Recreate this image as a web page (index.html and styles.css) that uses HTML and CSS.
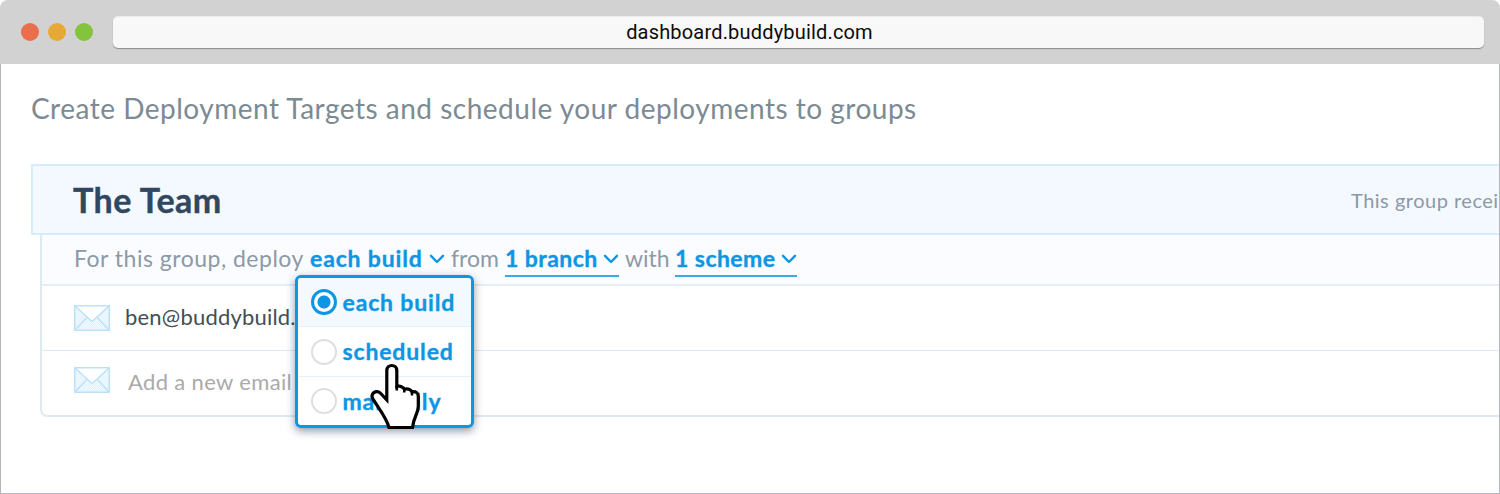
FILE: index.html
```html
<!DOCTYPE html>
<html lang="en">
<head>
<meta charset="utf-8">
<title>Deployment Targets</title>
<link rel="stylesheet" href="styles.css">
</head>
<body>
<svg class="defs" aria-hidden="true">
  <defs>
    <pattern id="dots" width="2" height="2" patternUnits="userSpaceOnUse">
      <rect width="2" height="2" fill="#f0f9ff"/><rect width="1" height="1" fill="#e2f3fe"/><rect x="1" y="1" width="1" height="1" fill="#e2f3fe"/>
    </pattern>
    <symbol id="mail" viewBox="0 0 36 26">
      <path d="M1 1h34v24H1z" fill="url(#dots)"/>
      <path d="M1 1h34L18 16.500z" fill="#fff"/>
      <path d="M.75.75h34.500v24.500H.75zM1 1l17 15.500L35 1M1 25l11.800-12.500M35 25L23.200 12.500" fill="none" stroke="#bce2fa" stroke-width="1.500"/>
    </symbol>
    <symbol id="chevron" viewBox="0 0 16 10">
      <path d="M2 1.800L8 8l6-6.200" fill="none" stroke="#0d96e3" stroke-width="2.400" stroke-linecap="round" stroke-linejoin="round"/>
    </symbol>
  </defs>
</svg>
<div class="window">
  <header class="toolbar">
    <div class="lights"><i class="light close"></i><i class="light minimize"></i><i class="light expand"></i></div>
    <div class="address"><span>dashboard.buddybuild.com</span></div>
  </header>
  <main class="page">
    <h1 class="title">Create Deployment Targets and schedule your deployments to groups</h1>
    <section class="group">
      <div class="group-head">
        <h2 class="group-name">The Team</h2>
        <span class="group-note">This group receiv</span>
      </div>
      <div class="group-body">
        <div class="rule">
          <span class="word intro">For this group, deploy</span>
          <div class="picker timing">
            <span class="value each">each build</span><svg class="chevron"><use href="#chevron"/></svg>
            <div class="menu">
              <div class="option selected"><i class="radio"></i><span class="label each">each build</span></div>
              <div class="option"><i class="radio"></i><span class="label each">scheduled</span></div>
              <div class="option"><i class="radio"></i><span class="label each">manually</span></div>
              <svg class="cursor" viewBox="0 0 54 68">
                <path d="M20.800 39V9.500C20.800 2.800 30.800 2.800 30.800 9.500V25.500C34 24.500 37.500 26 38.300 28.300C41.500 27 45 28.500 46 31C49.500 29.800 52.300 32 52.300 35.500V45C52.300 53 47.500 56 46.500 66.500H23C21.500 59 16.500 52.500 7.500 39C3 32.500 10.500 28 14.800 32.500Z" fill="#fff" stroke="#000" stroke-width="3.200"/>
                <path d="M30.800 24.500v5M38.300 27.500v4M46 30.500v4" fill="none" stroke="#000" stroke-width="2.500"/>
              </svg>
            </div>
          </div>
          <span class="word from">from</span>
          <div class="picker underlined branch"><span class="value">1 branch</span><svg class="chevron"><use href="#chevron"/></svg></div>
          <span class="word with">with</span>
          <div class="picker underlined scheme"><span class="value">1 scheme</span><svg class="chevron"><use href="#chevron"/></svg></div>
        </div>
        <div class="member"><svg class="mail"><use href="#mail"/></svg><span class="email">ben@buddybuild.</span></div>
        <div class="member new"><svg class="mail"><use href="#mail"/></svg><span class="placeholder">Add a new email</span></div>
      </div>
    </section>
  </main>
</div>
</body>
</html>
```
FILE: styles.css
```css
* { box-sizing: border-box; }
body { margin: 0; background: #fff; font-family: Lato, "Liberation Sans", sans-serif; }
.defs { position: absolute; width: 0; height: 0; }
.window { width: 1500px; height: 494px; overflow: hidden; display: flex; flex-direction: column; }
.toolbar { flex: none; height: 64px; padding: 0 16px 0 21px; display: flex; align-items: center; gap: 20px; background: #d2d2d2; border-radius: 8px 8px 0 0; }
.lights { display: flex; gap: 9px; }
.light { width: 18px; height: 18px; border-radius: 50%; }
.close { background: #ea6e4b; }
.minimize { background: #e7a936; }
.expand { background: #84c43c; }
.address { flex: 1; height: 32px; padding-right: 98px; border-radius: 5px; background: #f8f8f8; border-top: 1px solid #ececec; box-shadow: 0 1px 1px #8c8c8c; text-align: center; font: 20px/31px Roboto, sans-serif; letter-spacing: .18px; color: #0b0b0b; }
.page { flex: 1; border: 1px solid #b5b7ba; border-top: 0; padding: 24px 0 0 30px; overflow: hidden; }
.title { margin: 0; height: 76px; font-size: 28px; line-height: 40px; font-weight: 400; letter-spacing: .5px; color: #7c8a93; white-space: nowrap; }
.group-head { height: 71px; border: 2px solid #d5edfb; border-right: 0; background: #f3f9fe; display: flex; align-items: center; padding-left: 40px; }
.group-name { margin: 0; width: 1278px; flex: none; font-size: 34px; line-height: 40px; letter-spacing: .5px; color: #31475f; -webkit-text-stroke: .4px #31475f; }
.group-note { flex: none; font-size: 20px; letter-spacing: .5px; color: #8c98a7; white-space: nowrap; }
.group-body { margin-left: 9px; height: 182px; border: solid #deeaf3; border-width: 0 0 2px 2px; border-radius: 0 0 0 7px; }
.rule { height: 51px; background: #fbfcff; border-bottom: 2px solid #e6edf3; padding-left: 32px; display: flex; font-size: 23px; line-height: 47px; color: #8d99a6; white-space: nowrap; }
.word { flex: none; }
.intro { width: 236px; letter-spacing: .5px; }
.from { width: 54px; }
.with { width: 50px; }
.picker { flex: none; height: 41px; position: relative; display: flex; justify-content: space-between; color: #0d96e3; font-weight: 700; letter-spacing: .45px; -webkit-text-stroke: .35px #0d96e3; }
.timing { width: 135px; margin-right: 6px; }
.each { letter-spacing: .85px; }
.branch { width: 114px; margin-right: 6px; }
.scheme { width: 122px; }
.underlined { height: 42px; border-bottom: 2px solid #3aaae8; }
.chevron { width: 16px; height: 10px; margin-top: 19px; }
.menu { position: absolute; left: -15px; top: 40px; width: 179px; height: 153px; background: #fff; border: 3px solid #0d96e3; border-radius: 6px; box-shadow: 0 3px 9px rgba(30, 45, 80, .5); z-index: 2; }
.option { height: 50px; display: flex; align-items: center; gap: 6px; padding-left: 12.5px; border-bottom: 1px solid #dff2fd; line-height: 46px; }
.option .label { margin-top: -1px; }
.option:nth-child(3) { height: 48px; border: 0; }
.selected { height: 49px; background: #f3f9fe; border-radius: 3px 3px 0 0; }
.radio { width: 26px; height: 26px; border: 2px solid #dedede; border-radius: 50%; background: #fff; }
.selected .radio { border: 3px solid #0d96e3; background: radial-gradient(circle, #0d96e3 6px, #fff 7px); }
.cursor { position: absolute; left: 68px; top: 83px; width: 54px; height: 68px; }
.member { height: 65px; border-bottom: 1px solid #dceaf4; padding-left: 32px; display: flex; align-items: center; font-size: 22px; letter-spacing: .2px; color: #424e54; }
.member span { margin-top: -3px; }
.mail { flex: none; width: 36px; height: 26px; margin-right: 15px; }
.new { height: 64px; border: 0; letter-spacing: .35px; color: #aaa; }
.new .mail { margin-right: 18px; margin-top: -6px; }
```
